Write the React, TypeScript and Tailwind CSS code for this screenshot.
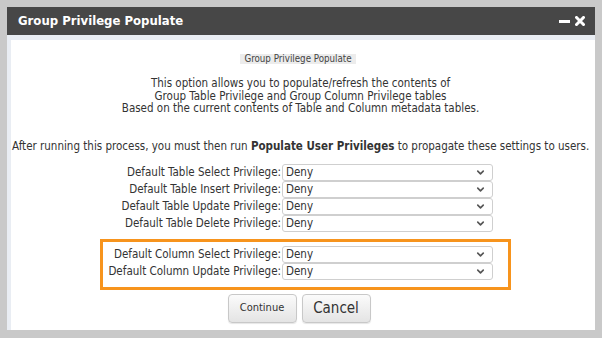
import React from 'react';
import { ChevronDown } from 'lucide-react';

const font = "font-['Tahoma','DejaVu_Sans_Condensed','DejaVu_Sans',sans-serif]";

// select box that always shows "Deny"
function DenySelect() {
  return (
    <div className="w-[211px] h-[17px] border border-[#cfcfcf] rounded-[3px] bg-white flex items-center justify-between pl-[3px] pr-[6px]">
      <span className="text-[11.5px] text-[#333] leading-none">Deny</span>
      <ChevronDown size={11} strokeWidth={3.5} className="text-[#555]" />
    </div>
  );
}

function PrivRow({ label, labelWidth }: { label: string; labelWidth: string }) {
  return (
    <div className="flex items-center h-[17px]">
      <div className={`${labelWidth} text-right text-[11.5px] text-[#333] pr-[1px] whitespace-nowrap`}>{label}</div>
      <DenySelect />
    </div>
  );
}

export default function App() {
  const tableRows = [
    'Default Table Select Privilege:',
    'Default Table Insert Privilege:',
    'Default Table Update Privilege:',
    'Default Table Delete Privilege:',
  ];
  const columnRows = ['Default Column Select Privilege:', 'Default Column Update Privilege:'];

  return (
    <div className={`w-[602px] h-[338px] bg-[#c9c9c9] pt-[7px] pl-[7px] overflow-hidden ${font}`}>
      <div className="w-[588px] flex flex-col">
        {/* title bar */}
        <div className="h-[28px] bg-[#474747] flex items-center justify-between pl-[11px] pr-[10px]">
          <span className="text-white font-bold text-[13px]">Group Privilege Populate</span>
          <div className="flex items-center gap-[5px]">
            <div className="w-[11px] h-[3px] bg-white" />
            <svg width="10" height="10" viewBox="0 0 10 10">
              <path d="M1.5 1.5 L8.5 8.5 M8.5 1.5 L1.5 8.5" stroke="white" strokeWidth="3" strokeLinecap="square" />
            </svg>
          </div>
        </div>

        {/* body */}
        <div className="h-[295px] bg-white border-t-[5px] border-l-4 border-[#e9edf3] flex flex-col text-[#333]">
          <div className="flex justify-center mt-[14px] pr-[10px]">
            <span className="bg-[#ececec] text-[9.7px] leading-[10px] px-[4px] text-[#444]">Group Privilege Populate</span>
          </div>

          <div className="mt-[13px] text-center text-[11.5px] leading-[12.5px] pr-[5px]">
            <p>This option allows you to populate/refresh the contents of</p>
            <p>Group Table Privilege and Group Column Privilege tables</p>
            <p>Based on the current contents of Table and Column metadata tables.</p>
          </div>

          <p className="mt-[25px] text-[11.5px] leading-[12.5px] pl-[1px] whitespace-nowrap">
            After running this process, you must then run <b>Populate User Privileges</b> to propagate these settings to users.
          </p>

          <div className="mt-[12px] flex flex-col">
            {tableRows.map((r) => (
              <PrivRow key={r} label={r} labelWidth="w-[271px]" />
            ))}
          </div>

          <div className="mt-[7px] ml-[89px] w-[411px] h-[51px] border-[3px] border-[#f7941d] pt-[4px]">
            {columnRows.map((r) => (
              <PrivRow key={r} label={r} labelWidth="w-[179px]" />
            ))}
          </div>

          <div className="mt-[4px] flex justify-center gap-[5px] pr-[8px]">
            <button className="w-[69px] h-[29px] rounded-[4px] border border-[#c8c8c8] bg-gradient-to-b from-[#fbfbfb] to-[#e4e4e4] shadow-[0_1px_1px_rgba(0,0,0,0.1)] text-[11px] text-[#333]">
              Continue
            </button>
            <button className="w-[69px] h-[29px] rounded-[4px] border border-[#c8c8c8] bg-gradient-to-b from-[#fbfbfb] to-[#e4e4e4] shadow-[0_1px_1px_rgba(0,0,0,0.1)] text-[15px] text-[#333]">
              Cancel
            </button>
          </div>
        </div>
      </div>
    </div>
  );
}
